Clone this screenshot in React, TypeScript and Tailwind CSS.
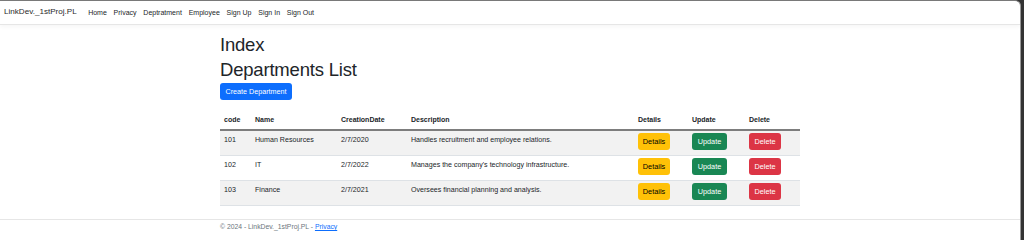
import React from "react";

const rows = [
  { code: "101", name: "Human Resources", date: "2/7/2020", desc: "Handles recruitment and employee relations." },
  { code: "102", name: "IT", date: "2/7/2022", desc: "Manages the company's technology infrastructure." },
  { code: "103", name: "Finance", date: "2/7/2021", desc: "Oversees financial planning and analysis." },
];

const links = ["Home", "Privacy", "Deptratment", "Employee", "Sign Up", "Sign In", "Sign Out"];

export default function App() {
  return (
    <div
      className="h-[240px] w-[1024px] overflow-hidden bg-[#333333] text-[#212529]"
      style={{ fontFamily: '"Liberation Sans", Arial, sans-serif' }}
    >
      <div className="mr-[3px] flex h-full flex-col rounded-tr-[6px] border-t border-r border-t-[#7a7a7a] border-r-[#9a9a9a] bg-white">
        <nav className="flex h-[24px] items-center border-b border-[#e6e6e6] pl-[4px] shadow-[0_2px_4px_rgba(0,0,0,0.04)]">
          <span className="mr-[8px] text-[8.1px] leading-none font-normal text-[#2a2a2a]">LinkDev._1stProj.PL</span>
          <ul className="flex items-center">
            {links.map((l) => (
              <li key={l} className="px-[3.4px] text-[7px] leading-none text-[#212529]">
                {l}
              </li>
            ))}
          </ul>
        </nav>

        <main className="ml-[220px] w-[580px] pt-[9px]">
          <h1 className="mb-[3px] text-[18.5px] leading-[22px] font-medium tracking-[-0.2px]">Index</h1>
          <h1 className="text-[18.5px] leading-[22px] font-medium tracking-[-0.2px]">Departments List</h1>
          <button className="mt-[2px] flex h-[17px] w-[72px] items-center justify-center rounded-[3px] bg-[#0d6efd] text-[7.2px] leading-none text-white">
            Create Department
          </button>

          <table className="mt-[11px] w-[580px] table-fixed border-collapse text-[7.1px]">
            <colgroup>
              <col className="w-[31px]" />
              <col className="w-[86px]" />
              <col className="w-[70px]" />
              <col className="w-[227px]" />
              <col className="w-[54px]" />
              <col className="w-[57px]" />
              <col className="w-[55px]" />
            </colgroup>
            <thead>
              <tr className="border-b-2 border-[#7d7d7d]">
                {["code", "Name", "CreationDate", "Description", "Details", "Update", "Delete"].map((h) => (
                  <th key={h} className="px-[4px] py-[4px] text-left align-top text-[7px] leading-[10px] font-bold">
                    {h}
                  </th>
                ))}
              </tr>
            </thead>
            <tbody>
              {rows.map((r, i) => (
                <tr key={r.code} className={`border-b border-[#dee2e6] ${i % 2 === 0 ? "bg-[#f2f2f2]" : "bg-white"}`}>
                  <td className="px-[4px] pt-[2px] pb-[5px] align-top leading-[10px]">
                    <div className="pt-[2px]">{r.code}</div>
                  </td>
                  <td className="px-[4px] pt-[2px] pb-[5px] align-top leading-[10px]">
                    <div className="pt-[2px]">{r.name}</div>
                  </td>
                  <td className="px-[4px] pt-[2px] pb-[5px] align-top leading-[10px]">
                    <div className="pt-[2px]">{r.date}</div>
                  </td>
                  <td className="px-[4px] pt-[2px] pb-[5px] align-top leading-[10px]">
                    <div className="pt-[2px]">{r.desc}</div>
                  </td>
                  <td className="px-[4px] pt-[2px] pb-[5px] align-top">
                    <button className="flex h-[17px] w-[32px] items-center justify-center rounded-[3px] bg-[#ffc107] text-[7.3px] leading-none text-black">
                      Details
                    </button>
                  </td>
                  <td className="px-[4px] pt-[2px] pb-[5px] align-top">
                    <button className="flex h-[17px] w-[35px] items-center justify-center rounded-[3px] bg-[#198754] text-[7.3px] leading-none text-white">
                      Update
                    </button>
                  </td>
                  <td className="px-[4px] pt-[2px] pb-[5px] align-top">
                    <button className="flex h-[17px] w-[32px] items-center justify-center rounded-[3px] bg-[#dc3545] text-[7.3px] leading-none text-white">
                      Delete
                    </button>
                  </td>
                </tr>
              ))}
            </tbody>
          </table>
        </main>

        <footer className="mt-[13px] border-t border-[#e6e6e6] pt-[2px]">
          <div className="ml-[220px] text-[6.8px] leading-[10px] text-[#6c757d]">
            © 2024 - LinkDev._1stProj.PL - <a className="text-[#0d6efd] underline">Privacy</a>
          </div>
        </footer>
      </div>
    </div>
  );
}
